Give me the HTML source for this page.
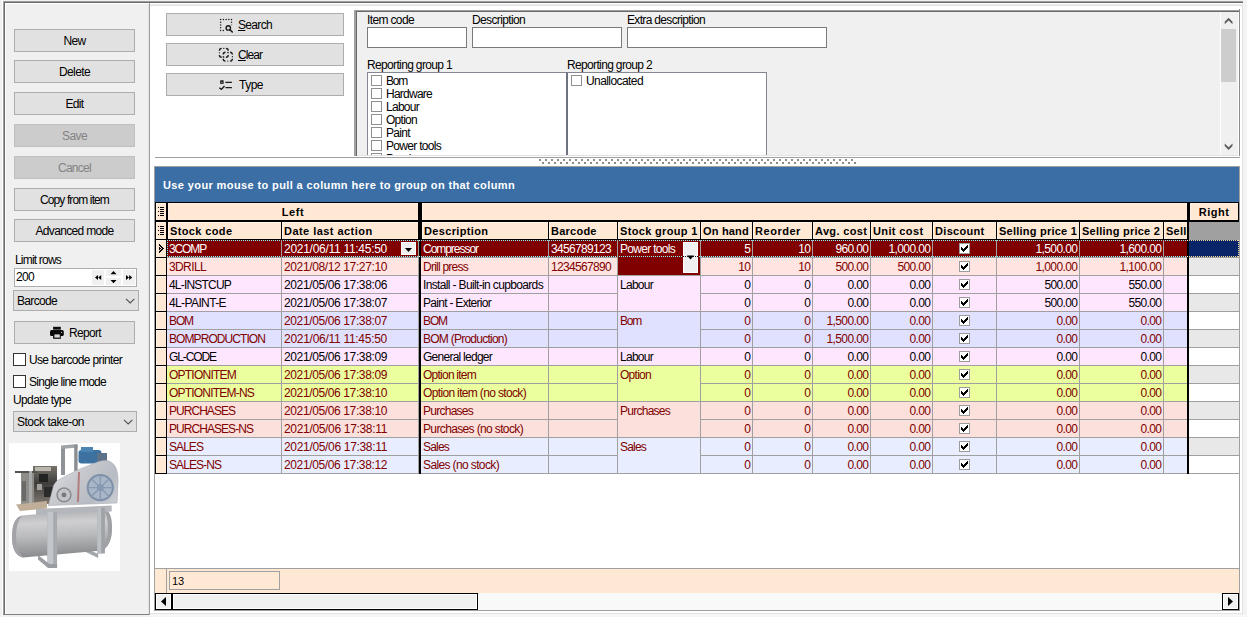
<!DOCTYPE html><html><head><meta charset="utf-8"><title>Stock items</title><style>
html,body{margin:0;padding:0;}
body{width:1247px;height:617px;background:#f0f0f0;position:relative;overflow:hidden;font-family:"Liberation Sans",sans-serif;font-size:11px;color:#000;}
div{position:absolute;box-sizing:border-box;}
svg{position:absolute;overflow:visible;}
.t{line-height:13px;height:13px;white-space:nowrap;font-size:12px;}
.b{line-height:13px;height:13px;white-space:nowrap;font-size:11px;font-weight:bold;letter-spacing:0.3px;}
.btn{background:#e1e1e1;border:1px solid #adadad;}
.btn.dis{background:#cccccc;border-color:#bfbfbf;}
.m{color:#800000;}
.w{color:#fff;}
</style></head><body>
<div style="left:2px;top:0px;width:1px;height:617px;background:#fff;"></div>
<div style="left:3px;top:1px;width:1242px;height:1px;background:#a0a0a0;"></div>
<div style="left:3px;top:1px;width:1px;height:614px;background:#a0a0a0;"></div>
<div style="left:4px;top:2px;width:1241px;height:1px;background:#696969;"></div>
<div style="left:4px;top:2px;width:1px;height:613px;background:#696969;"></div>
<div style="left:5px;top:3px;width:1240px;height:1px;background:#fff;"></div>
<div style="left:5px;top:3px;width:1px;height:611px;background:#fff;"></div>
<div style="left:3px;top:614px;width:147px;height:1px;background:#808080;"></div>
<div style="left:149px;top:3px;width:1px;height:612px;background:#a0a0a0;"></div>
<div style="left:148px;top:4px;width:1px;height:610px;background:#e3e3e3;"></div>
<div style="left:150px;top:4px;width:1092px;height:611px;background:#fff;"></div>
<div style="left:150px;top:4px;width:1092px;height:1px;background:#f0f0f0;"></div>
<div style="left:150px;top:5px;width:1092px;height:1px;background:#e0e0e0;"></div>
<div style="left:1242px;top:4px;width:1px;height:610px;background:#e3e3e3;"></div>
<div style="left:1243px;top:0px;width:4px;height:617px;background:#f4f4f4;"></div>
<div style="left:150px;top:613px;width:1093px;height:1px;background:#e3e3e3;"></div>
<div style="left:150px;top:614px;width:1097px;height:3px;background:#f6f6f6;"></div>
<div class="btn" style="left:14px;top:29px;width:121px;height:23px;"></div>
<div class="t" style="left:14px;top:35px;width:121px;text-align:center;letter-spacing:-0.668px;">New</div>
<div class="btn" style="left:14px;top:60px;width:121px;height:23px;"></div>
<div class="t" style="left:14px;top:66px;width:121px;text-align:center;letter-spacing:-0.614px;">Delete</div>
<div class="btn" style="left:14px;top:92px;width:121px;height:23px;"></div>
<div class="t" style="left:14px;top:98px;width:121px;text-align:center;letter-spacing:-0.67px;">Edit</div>
<div class="btn dis" style="left:14px;top:124px;width:121px;height:23px;"></div>
<div class="t" style="left:14px;top:130px;width:121px;text-align:center;letter-spacing:-0.588px;color:#838383;">Save</div>
<div class="btn dis" style="left:14px;top:156px;width:121px;height:23px;"></div>
<div class="t" style="left:14px;top:162px;width:121px;text-align:center;letter-spacing:-0.725px;color:#838383;">Cancel</div>
<div class="btn" style="left:14px;top:188px;width:121px;height:23px;"></div>
<div class="t" style="left:14px;top:194px;width:121px;text-align:center;letter-spacing:-0.882px;">Copy from item</div>
<div class="btn" style="left:14px;top:219px;width:121px;height:23px;"></div>
<div class="t" style="left:14px;top:225px;width:121px;text-align:center;letter-spacing:-0.671px;">Advanced mode</div>
<div class="t" style="left:15px;top:254px;letter-spacing:-0.801px;">Limit rows</div>
<div style="left:14px;top:268px;width:123px;height:19px;background:#fff;border:1px solid #adadad;"></div>
<div class="t" style="left:16px;top:271px;letter-spacing:-0.673px;">200</div>
<div style="left:92px;top:270px;width:12px;height:15px;background:#f0f0f0;"></div>
<div style="left:106px;top:270px;width:15px;height:6px;background:#f0f0f0;"></div>
<div style="left:106px;top:278px;width:15px;height:7px;background:#f0f0f0;"></div>
<div style="left:123px;top:270px;width:12px;height:15px;background:#f0f0f0;"></div>
<div style="left:13px;top:290px;width:126px;height:21px;background:#e1e1e1;border:1px solid #adadad;"></div>
<div class="t" style="left:17px;top:295px;letter-spacing:-0.671px;">Barcode</div>
<div class="btn" style="left:14px;top:321px;width:121px;height:23px;"></div>
<div class="t" style="left:69px;top:327px;letter-spacing:-0.67px;">Report</div>
<div style="left:13px;top:353px;width:13px;height:13px;background:#fff;border:1px solid #333;"></div>
<div class="t" style="left:29px;top:354px;letter-spacing:-0.652px;">Use barcode printer</div>
<div style="left:13px;top:375px;width:13px;height:13px;background:#fff;border:1px solid #333;"></div>
<div class="t" style="left:29px;top:376px;letter-spacing:-0.733px;">Single line mode</div>
<div class="t" style="left:13px;top:394px;letter-spacing:-0.61px;">Update type</div>
<div style="left:13px;top:411px;width:124px;height:21px;background:#e1e1e1;border:1px solid #adadad;"></div>
<div class="t" style="left:17px;top:416px;letter-spacing:-0.49px;">Stock take-on</div>
<svg style="left:9px;top:443px" width="111" height="128" viewBox="0 0 111 128">
<defs>
<linearGradient id="tk" x1="0" y1="0" x2="0.1" y2="1"><stop offset="0" stop-color="#a4a5a8"/><stop offset="0.32" stop-color="#cfcfd1"/><stop offset="0.6" stop-color="#b9babc"/><stop offset="1" stop-color="#8a8b8e"/></linearGradient>
<linearGradient id="gd" x1="0" y1="0.2" x2="1" y2="0.8"><stop offset="0" stop-color="#dddee2"/><stop offset="0.4" stop-color="#c6c8cd"/><stop offset="0.75" stop-color="#b7bbc3"/><stop offset="1" stop-color="#c8cbd1"/></linearGradient>
<linearGradient id="en" x1="0" y1="0" x2="0" y2="1"><stop offset="0" stop-color="#77736c"/><stop offset="0.45" stop-color="#3f3d3c"/><stop offset="1" stop-color="#7d766d"/></linearGradient>
<filter id="bl" x="-5%" y="-5%" width="110%" height="110%"><feGaussianBlur stdDeviation="0.6"/></filter>
</defs>
<rect width="111" height="128" fill="#fff"/>
<g filter="url(#bl)">
<path d="M73.6 103.7 L89.2 111 L89.2 115 L73.6 107.5 Z" fill="#a2a6ab"/>
<path d="M13 72.5 L94 65.5 Q103 67 103 85 Q103 102 93 107.5 L14 114.5 Q3 112 3 93.5 Q3 75 13 72.5 Z" fill="url(#tk)"/>
<path d="M94 65.5 Q103 67 103 85 Q103 102 93 107.5 Q99 99 99 85 Q99 72 94 65.5Z" fill="#9fa1a4"/>
<path d="M13 72.5 Q3 75 3 93.5 Q3 112 14 114.5 Q7 107 7 93.5 Q7 80 13 72.5Z" fill="#a2a4a7"/>
<rect x="52" y="3" width="4" height="29" fill="#8f9297"/><path d="M52 2.5 L68.5 1 L68.5 4.5 L52 6 Z" fill="#a0a3a8"/><rect x="65.2" y="2" width="3.4" height="26" fill="#8a8d92"/>
<rect x="69.5" y="7" width="23" height="13.5" rx="3" fill="#3d72a0"/><rect x="72" y="4" width="12" height="5" fill="#4c84b3"/><rect x="88" y="10" width="10" height="8" fill="#5d7187"/>
<rect x="24" y="23" width="24" height="38" fill="url(#en)"/>
<rect x="12" y="30" width="13" height="32" fill="#8e8d8a"/>
<rect x="6" y="28" width="22" height="2" fill="#55524e"/>
<rect x="20" y="28" width="3" height="36" fill="#a9abab"/><rect x="30" y="31" width="9" height="8" fill="#222"/><rect x="35" y="44" width="9" height="10" fill="#2b2b2b"/>
<rect x="13" y="38" width="4" height="20" fill="#6b6a68"/><rect x="26" y="24" width="16" height="4" fill="#b9b6ae"/><rect x="28" y="41" width="5" height="6" fill="#a3a19c"/>
<path d="M7 61.5 L38 58 L38 65.5 L11 68 Z" fill="#c0ae98"/>
<path d="M39.4 62.5 L44.6 42.5 Q47 37.5 52 35.5 L68.5 27 L90 18.5 Q101 15 106 23 Q109.5 29 109 40 L108 60 Z" fill="url(#gd)" stroke="#a9adb3" stroke-width="0.6"/>
<circle cx="91.3" cy="44.6" r="12.6" fill="#a9b6c7" stroke="#7d90a8" stroke-width="2"/>
<circle cx="91.3" cy="44.6" r="3.4" fill="#7f92aa"/>
<path d="M91.3 32 V57.2 M78.7 44.6 H103.9 M82.4 35.7 L100.2 53.5 M82.4 53.5 L100.2 35.7" stroke="#879ab2" stroke-width="1.4"/>
<circle cx="55" cy="51.9" r="6.9" fill="#c3c4c8" stroke="#8a8b90" stroke-width="1.5"/><circle cx="55" cy="51.9" r="2.4" fill="#77787d"/>
<path d="M70 29 L69 59" stroke="#b06a6a" stroke-width="2" opacity="0.8"/>
<path d="M27 66 L102.7 62.5 L102.7 68.5 L27 72 Z" fill="#b3b7bc"/>
<rect x="38.4" y="69" width="9.7" height="54.5" fill="#a7abb0"/><rect x="38.4" y="69" width="5.8" height="54.5" fill="#c3c6ca"/>
<rect x="88.2" y="64.5" width="7.7" height="46" fill="#9fa3a8"/><rect x="88.2" y="64.5" width="4" height="46" fill="#bcbfc4"/>
<path d="M29 112 L40.5 121 L48.1 121 L48.1 125 L39 125 L29 116.5 Z" fill="#9a9ea3"/>
</g>
</svg>

<div class="btn" style="left:166px;top:13px;width:178px;height:23px;"></div>
<div class="btn" style="left:166px;top:43px;width:178px;height:23px;"></div>
<div class="btn" style="left:166px;top:73px;width:178px;height:23px;"></div>
<div class="t" style="left:238px;top:19px;letter-spacing:-0.67px;"><span style="text-decoration:underline">S</span>earch</div>
<div class="t" style="left:238px;top:49px;letter-spacing:-0.935px;"><span style="text-decoration:underline">C</span>lear</div>
<div class="t" style="left:239px;top:79px;letter-spacing:-0.504px;">Type</div>
<div style="left:354px;top:10px;width:886px;height:147px;background:#f0f0f0;"></div>
<div style="left:354px;top:10px;width:885px;height:1px;background:#a0a0a0;"></div>
<div style="left:354px;top:11px;width:885px;height:1px;background:#696969;"></div>
<div style="left:354px;top:10px;width:2px;height:146px;background:#a0a0a0;"></div>
<div style="left:356px;top:11px;width:1px;height:145px;background:#696969;"></div>
<div style="left:1238px;top:12px;width:1px;height:144px;background:#fff;"></div>
<div style="left:1239px;top:9px;width:1px;height:149px;background:#8c8c8c;"></div>
<div style="left:357px;top:155px;width:881px;height:1px;background:#e3e3e3;"></div>
<div style="left:354px;top:156px;width:886px;height:1px;background:#fff;"></div>
<div style="left:155px;top:157px;width:1085px;height:1px;background:#a0a0a0;"></div>
<div class="t" style="left:367px;top:14px;letter-spacing:-0.633px;">Item code</div>
<div class="t" style="left:472px;top:14px;letter-spacing:-0.638px;">Description</div>
<div class="t" style="left:627px;top:14px;letter-spacing:-0.669px;">Extra description</div>
<div style="left:367px;top:27px;width:100px;height:21px;background:#fff;border:1px solid #7a7a7a;"></div>
<div style="left:472px;top:27px;width:150px;height:21px;background:#fff;border:1px solid #7a7a7a;"></div>
<div style="left:627px;top:27px;width:200px;height:21px;background:#fff;border:1px solid #7a7a7a;"></div>
<div class="t" style="left:367px;top:59px;letter-spacing:-0.651px;">Reporting group 1</div>
<div class="t" style="left:567px;top:59px;letter-spacing:-0.651px;">Reporting group 2</div>
<div style="left:367px;top:72px;width:200px;height:83px;background:#fff;border:1px solid #828790;border-bottom:none;"></div>
<div style="left:566px;top:72px;width:201px;height:83px;background:#fff;border:1px solid #828790;border-left:2px solid #6d7380;border-bottom:none;"></div>
<div style="left:371px;top:75px;width:11px;height:11px;background:#fff;border:1px solid #8e8f8f;"></div>
<div class="t" style="left:386px;top:75px;letter-spacing:-1.225px;">Bom</div>
<div style="left:371px;top:88px;width:11px;height:11px;background:#fff;border:1px solid #8e8f8f;"></div>
<div class="t" style="left:386px;top:88px;letter-spacing:-0.752px;">Hardware</div>
<div style="left:371px;top:101px;width:11px;height:11px;background:#fff;border:1px solid #8e8f8f;"></div>
<div class="t" style="left:386px;top:101px;letter-spacing:-0.727px;">Labour</div>
<div style="left:371px;top:114px;width:11px;height:11px;background:#fff;border:1px solid #8e8f8f;"></div>
<div class="t" style="left:386px;top:114px;letter-spacing:-0.726px;">Option</div>
<div style="left:371px;top:127px;width:11px;height:11px;background:#fff;border:1px solid #8e8f8f;"></div>
<div class="t" style="left:386px;top:127px;letter-spacing:-0.67px;">Paint</div>
<div style="left:371px;top:140px;width:11px;height:11px;background:#fff;border:1px solid #8e8f8f;"></div>
<div class="t" style="left:386px;top:140px;letter-spacing:-0.7px;">Power tools</div>
<div style="left:371px;top:153px;width:11px;height:2px;background:#fff;border:1px solid #8e8f8f;border-bottom:none;"></div>
<div style="left:386px;top:153px;width:40px;height:2px;overflow:hidden;"><div class="t" style="left:0;top:0px;letter-spacing:-0.5px">Purchases</div></div>
<div style="left:571px;top:75px;width:11px;height:11px;background:#fff;border:1px solid #8e8f8f;"></div>
<div class="t" style="left:586px;top:75px;letter-spacing:-0.579px;">Unallocated</div>
<div style="left:1220px;top:12px;width:1px;height:143px;background:#fff;"></div>
<div style="left:1221px;top:12px;width:17px;height:143px;background:#f0f0f0;"></div>
<div style="left:1221px;top:29px;width:15px;height:53px;background:#cdcdcd;"></div>
<svg style="left:539px;top:159px" width="324" height="5" viewBox="0 0 324 5"><defs><pattern id="dp" width="6" height="5" patternUnits="userSpaceOnUse"><rect x="0" y="0" width="2" height="2" fill="#8c8c8c"/><rect x="3" y="3" width="2" height="2" fill="#8c8c8c"/></pattern></defs><rect x="0" y="0" width="317" height="5" fill="url(#dp)"/></svg>
<div style="left:154px;top:166px;width:1086px;height:445px;background:#fff;border:1px solid #a0a0a0;"></div>
<div style="left:155px;top:167px;width:1084px;height:35px;background:#3a6ea5;"></div>
<div class="b w" style="left:163px;top:179px;letter-spacing:0.387px;">Use your mouse to pull a column here to group on that column</div>
<div style="left:155px;top:202px;width:1084px;height:38px;background:#000;"></div>
<div style="left:156px;top:203px;width:10px;height:17px;background:#ffe8d4;box-shadow:inset 1px 1px 0 #fff3e8;"></div>
<div style="left:156px;top:222px;width:10px;height:17px;background:#ffe8d4;box-shadow:inset 1px 1px 0 #fff3e8;"></div>
<div style="left:168px;top:203px;width:250px;height:17px;background:#ffe8d4;box-shadow:inset 1px 1px 0 #fff3e8;"></div>
<div style="left:422px;top:203px;width:765px;height:17px;background:#ffe8d4;box-shadow:inset 1px 1px 0 #fff3e8;"></div>
<div style="left:1190px;top:203px;width:48px;height:17px;background:#ffe8d4;box-shadow:inset 1px 1px 0 #fff3e8;"></div>
<div style="left:1189px;top:222px;width:50px;height:17px;background:#a0a0a0;"></div>
<div style="left:1189px;top:239px;width:50px;height:1px;background:#a0a0a0;"></div>
<div class="b" style="left:168px;top:206px;width:250px;text-align:center;letter-spacing:0.56px;">Left</div>
<div class="b" style="left:1190px;top:206px;width:48px;text-align:center;letter-spacing:0.5px;">Right</div>
<div style="left:168px;top:222px;width:113px;height:17px;background:#ffe8d4;overflow:hidden;box-shadow:inset 1px 1px 0 #fff3e8;"><div class="b" style="left:2px;top:3px;letter-spacing:0.372px;">Stock code</div></div>
<div style="left:282px;top:222px;width:136px;height:17px;background:#ffe8d4;overflow:hidden;box-shadow:inset 1px 1px 0 #fff3e8;"><div class="b" style="left:2px;top:3px;letter-spacing:0.456px;">Date last action</div></div>
<div style="left:422px;top:222px;width:126px;height:17px;background:#ffe8d4;overflow:hidden;box-shadow:inset 1px 1px 0 #fff3e8;"><div class="b" style="left:2px;top:3px;letter-spacing:0.345px;">Description</div></div>
<div style="left:549px;top:222px;width:68px;height:17px;background:#ffe8d4;overflow:hidden;box-shadow:inset 1px 1px 0 #fff3e8;"><div class="b" style="left:2px;top:3px;letter-spacing:0.241px;">Barcode</div></div>
<div style="left:618px;top:222px;width:82px;height:17px;background:#ffe8d4;overflow:hidden;box-shadow:inset 1px 1px 0 #fff3e8;"><div class="b" style="left:2px;top:3px;letter-spacing:0.335px;">Stock group 1</div></div>
<div style="left:701px;top:222px;width:51px;height:17px;background:#ffe8d4;overflow:hidden;box-shadow:inset 1px 1px 0 #fff3e8;"><div class="b" style="left:2px;top:3px;letter-spacing:0.185px;">On hand</div></div>
<div style="left:753px;top:222px;width:59px;height:17px;background:#ffe8d4;overflow:hidden;box-shadow:inset 1px 1px 0 #fff3e8;"><div class="b" style="left:2px;top:3px;letter-spacing:0.532px;">Reorder</div></div>
<div style="left:813px;top:222px;width:57px;height:17px;background:#ffe8d4;overflow:hidden;box-shadow:inset 1px 1px 0 #fff3e8;"><div class="b" style="left:2px;top:3px;letter-spacing:0.356px;">Avg. cost</div></div>
<div style="left:871px;top:222px;width:61px;height:17px;background:#ffe8d4;overflow:hidden;box-shadow:inset 1px 1px 0 #fff3e8;"><div class="b" style="left:2px;top:3px;letter-spacing:0.383px;">Unit cost</div></div>
<div style="left:933px;top:222px;width:63px;height:17px;background:#ffe8d4;overflow:hidden;box-shadow:inset 1px 1px 0 #fff3e8;"><div class="b" style="left:2px;top:3px;letter-spacing:0.318px;">Discount</div></div>
<div style="left:997px;top:222px;width:82px;height:17px;background:#ffe8d4;overflow:hidden;box-shadow:inset 1px 1px 0 #fff3e8;"><div class="b" style="left:2px;top:3px;letter-spacing:0.228px;">Selling price 1</div></div>
<div style="left:1080px;top:222px;width:83px;height:17px;background:#ffe8d4;overflow:hidden;box-shadow:inset 1px 1px 0 #fff3e8;"><div class="b" style="left:2px;top:3px;letter-spacing:0.235px;">Selling price 2</div></div>
<div style="left:1164px;top:222px;width:23px;height:17px;background:#ffe8d4;overflow:hidden;box-shadow:inset 1px 1px 0 #fff3e8;"><div class="b" style="left:2px;top:3px;letter-spacing:0.235px;">Selling price 3</div></div>
<div style="left:155px;top:240px;width:1084px;height:234px;background:#a0a0a0;"></div>
<div style="left:155px;top:239px;width:12px;height:235px;background:#000;"></div>
<div style="left:156px;top:240px;width:10px;height:17px;background:#ffe8d4;box-shadow:inset 1px 1px 0 #fff3e8;"></div>
<div style="left:156px;top:258px;width:10px;height:17px;background:#ffe8d4;box-shadow:inset 1px 1px 0 #fff3e8;"></div>
<div style="left:156px;top:276px;width:10px;height:17px;background:#ffe8d4;box-shadow:inset 1px 1px 0 #fff3e8;"></div>
<div style="left:156px;top:294px;width:10px;height:17px;background:#ffe8d4;box-shadow:inset 1px 1px 0 #fff3e8;"></div>
<div style="left:156px;top:312px;width:10px;height:17px;background:#ffe8d4;box-shadow:inset 1px 1px 0 #fff3e8;"></div>
<div style="left:156px;top:330px;width:10px;height:17px;background:#ffe8d4;box-shadow:inset 1px 1px 0 #fff3e8;"></div>
<div style="left:156px;top:348px;width:10px;height:17px;background:#ffe8d4;box-shadow:inset 1px 1px 0 #fff3e8;"></div>
<div style="left:156px;top:366px;width:10px;height:17px;background:#ffe8d4;box-shadow:inset 1px 1px 0 #fff3e8;"></div>
<div style="left:156px;top:384px;width:10px;height:17px;background:#ffe8d4;box-shadow:inset 1px 1px 0 #fff3e8;"></div>
<div style="left:156px;top:402px;width:10px;height:17px;background:#ffe8d4;box-shadow:inset 1px 1px 0 #fff3e8;"></div>
<div style="left:156px;top:420px;width:10px;height:17px;background:#ffe8d4;box-shadow:inset 1px 1px 0 #fff3e8;"></div>
<div style="left:156px;top:438px;width:10px;height:17px;background:#ffe8d4;box-shadow:inset 1px 1px 0 #fff3e8;"></div>
<div style="left:156px;top:456px;width:10px;height:17px;background:#ffe8d4;box-shadow:inset 1px 1px 0 #fff3e8;"></div>
<div style="left:419px;top:240px;width:2px;height:234px;background:#000;"></div>
<div style="left:1187px;top:240px;width:2px;height:234px;background:#000;"></div>
<div style="left:167px;top:240px;width:114px;height:17px;background:#800000;"></div>
<div class="t" style="left:169px;top:243px;letter-spacing:-1.135px;color:#fff;">3COMP</div>
<div style="left:282px;top:240px;width:136px;height:17px;background:#800000;"></div>
<div class="t" style="left:284px;top:243px;letter-spacing:-0.28px;color:#fff;">2021/06/11 11:45:50</div>
<div style="left:421px;top:240px;width:127px;height:17px;background:#800000;"></div>
<div class="t" style="left:423px;top:243px;letter-spacing:-1.035px;color:#fff;">Compressor</div>
<div style="left:549px;top:240px;width:68px;height:17px;background:#800000;"></div>
<div class="t" style="left:551px;top:243px;letter-spacing:-0.673px;color:#fff;">3456789123</div>
<div style="left:701px;top:240px;width:51px;height:17px;background:#800000;"></div>
<div class="t" style="left:701px;top:243px;width:50px;text-align:right;letter-spacing:-0.673px;padding-right:0.673px;color:#fff;">5</div>
<div style="left:753px;top:240px;width:59px;height:17px;background:#800000;"></div>
<div class="t" style="left:753px;top:243px;width:58px;text-align:right;letter-spacing:-0.673px;padding-right:0.673px;color:#fff;">10</div>
<div style="left:813px;top:240px;width:57px;height:17px;background:#800000;"></div>
<div class="t" style="left:813px;top:243px;width:56px;text-align:right;letter-spacing:-0.617px;padding-right:0.617px;color:#fff;">960.00</div>
<div style="left:871px;top:240px;width:61px;height:17px;background:#800000;"></div>
<div class="t" style="left:871px;top:243px;width:60px;text-align:right;letter-spacing:-0.589px;padding-right:0.589px;color:#fff;">1,000.00</div>
<div style="left:933px;top:240px;width:63px;height:17px;background:#800000;"></div>
<div style="left:959px;top:243px;width:11px;height:11px;background:#fff;border:1px solid #9c9c9c;"></div>
<div style="left:997px;top:240px;width:82px;height:17px;background:#800000;"></div>
<div class="t" style="left:997px;top:243px;width:81px;text-align:right;letter-spacing:-0.589px;padding-right:0.589px;color:#fff;">1,500.00</div>
<div style="left:1080px;top:240px;width:83px;height:17px;background:#800000;"></div>
<div class="t" style="left:1080px;top:243px;width:82px;text-align:right;letter-spacing:-0.589px;padding-right:0.589px;color:#fff;">1,600.00</div>
<div style="left:1164px;top:240px;width:23px;height:17px;background:#800000;"></div>
<div style="left:1189px;top:240px;width:50px;height:17px;background:#0a246a;"></div>
<div style="left:167px;top:258px;width:114px;height:17px;background:#ffe4e1;"></div>
<div class="t" style="left:169px;top:261px;letter-spacing:-0.614px;color:#800000;">3DRILL</div>
<div style="left:282px;top:258px;width:136px;height:17px;background:#ffe4e1;"></div>
<div class="t" style="left:284px;top:261px;letter-spacing:-0.374px;color:#800000;">2021/08/12 17:27:10</div>
<div style="left:421px;top:258px;width:127px;height:17px;background:#ffe4e1;"></div>
<div class="t" style="left:423px;top:261px;letter-spacing:-0.758px;color:#800000;">Drill press</div>
<div style="left:549px;top:258px;width:68px;height:17px;background:#ffe4e1;"></div>
<div class="t" style="left:551px;top:261px;letter-spacing:-0.673px;color:#800000;">1234567890</div>
<div style="left:701px;top:258px;width:51px;height:17px;background:#ffe4e1;"></div>
<div class="t" style="left:701px;top:261px;width:50px;text-align:right;letter-spacing:-0.673px;padding-right:0.673px;color:#800000;">10</div>
<div style="left:753px;top:258px;width:59px;height:17px;background:#ffe4e1;"></div>
<div class="t" style="left:753px;top:261px;width:58px;text-align:right;letter-spacing:-0.673px;padding-right:0.673px;color:#800000;">10</div>
<div style="left:813px;top:258px;width:57px;height:17px;background:#ffe4e1;"></div>
<div class="t" style="left:813px;top:261px;width:56px;text-align:right;letter-spacing:-0.617px;padding-right:0.617px;color:#800000;">500.00</div>
<div style="left:871px;top:258px;width:61px;height:17px;background:#ffe4e1;"></div>
<div class="t" style="left:871px;top:261px;width:60px;text-align:right;letter-spacing:-0.617px;padding-right:0.617px;color:#800000;">500.00</div>
<div style="left:933px;top:258px;width:63px;height:17px;background:#ffe4e1;"></div>
<div style="left:959px;top:261px;width:11px;height:11px;background:#fff;border:1px solid #9c9c9c;"></div>
<div style="left:997px;top:258px;width:82px;height:17px;background:#ffe4e1;"></div>
<div class="t" style="left:997px;top:261px;width:81px;text-align:right;letter-spacing:-0.589px;padding-right:0.589px;color:#800000;">1,000.00</div>
<div style="left:1080px;top:258px;width:83px;height:17px;background:#ffe4e1;"></div>
<div class="t" style="left:1080px;top:261px;width:82px;text-align:right;letter-spacing:-0.589px;padding-right:0.589px;color:#800000;">1,100.00</div>
<div style="left:1164px;top:258px;width:23px;height:17px;background:#ffe4e1;"></div>
<div style="left:1189px;top:258px;width:50px;height:17px;background:#e8e8e8;"></div>
<div style="left:167px;top:276px;width:114px;height:17px;background:#ffe6ff;"></div>
<div class="t" style="left:169px;top:279px;letter-spacing:-0.801px;color:#000;">4L-INSTCUP</div>
<div style="left:282px;top:276px;width:136px;height:17px;background:#ffe6ff;"></div>
<div class="t" style="left:284px;top:279px;letter-spacing:-0.374px;color:#000;">2021/05/06 17:38:06</div>
<div style="left:421px;top:276px;width:127px;height:17px;background:#ffe6ff;"></div>
<div class="t" style="left:423px;top:279px;letter-spacing:-0.645px;color:#000;">Install - Built-in cupboards</div>
<div style="left:549px;top:276px;width:68px;height:17px;background:#ffe6ff;"></div>
<div style="left:701px;top:276px;width:51px;height:17px;background:#ffe6ff;"></div>
<div class="t" style="left:701px;top:279px;width:50px;text-align:right;letter-spacing:-0.673px;padding-right:0.673px;color:#000;">0</div>
<div style="left:753px;top:276px;width:59px;height:17px;background:#ffe6ff;"></div>
<div class="t" style="left:753px;top:279px;width:58px;text-align:right;letter-spacing:-0.673px;padding-right:0.673px;color:#000;">0</div>
<div style="left:813px;top:276px;width:57px;height:17px;background:#ffe6ff;"></div>
<div class="t" style="left:813px;top:279px;width:56px;text-align:right;letter-spacing:-0.589px;padding-right:0.589px;color:#000;">0.00</div>
<div style="left:871px;top:276px;width:61px;height:17px;background:#ffe6ff;"></div>
<div class="t" style="left:871px;top:279px;width:60px;text-align:right;letter-spacing:-0.589px;padding-right:0.589px;color:#000;">0.00</div>
<div style="left:933px;top:276px;width:63px;height:17px;background:#ffe6ff;"></div>
<div style="left:959px;top:279px;width:11px;height:11px;background:#fff;border:1px solid #9c9c9c;"></div>
<div style="left:997px;top:276px;width:82px;height:17px;background:#ffe6ff;"></div>
<div class="t" style="left:997px;top:279px;width:81px;text-align:right;letter-spacing:-0.617px;padding-right:0.617px;color:#000;">500.00</div>
<div style="left:1080px;top:276px;width:83px;height:17px;background:#ffe6ff;"></div>
<div class="t" style="left:1080px;top:279px;width:82px;text-align:right;letter-spacing:-0.617px;padding-right:0.617px;color:#000;">550.00</div>
<div style="left:1164px;top:276px;width:23px;height:17px;background:#ffe6ff;"></div>
<div style="left:1189px;top:276px;width:50px;height:17px;background:#fff;"></div>
<div style="left:167px;top:294px;width:114px;height:17px;background:#ffe6ff;"></div>
<div class="t" style="left:169px;top:297px;letter-spacing:-0.613px;color:#000;">4L-PAINT-E</div>
<div style="left:282px;top:294px;width:136px;height:17px;background:#ffe6ff;"></div>
<div class="t" style="left:284px;top:297px;letter-spacing:-0.374px;color:#000;">2021/05/06 17:38:07</div>
<div style="left:421px;top:294px;width:127px;height:17px;background:#ffe6ff;"></div>
<div class="t" style="left:423px;top:297px;letter-spacing:-0.71px;color:#000;">Paint - Exterior</div>
<div style="left:549px;top:294px;width:68px;height:17px;background:#ffe6ff;"></div>
<div style="left:701px;top:294px;width:51px;height:17px;background:#ffe6ff;"></div>
<div class="t" style="left:701px;top:297px;width:50px;text-align:right;letter-spacing:-0.673px;padding-right:0.673px;color:#000;">0</div>
<div style="left:753px;top:294px;width:59px;height:17px;background:#ffe6ff;"></div>
<div class="t" style="left:753px;top:297px;width:58px;text-align:right;letter-spacing:-0.673px;padding-right:0.673px;color:#000;">0</div>
<div style="left:813px;top:294px;width:57px;height:17px;background:#ffe6ff;"></div>
<div class="t" style="left:813px;top:297px;width:56px;text-align:right;letter-spacing:-0.589px;padding-right:0.589px;color:#000;">0.00</div>
<div style="left:871px;top:294px;width:61px;height:17px;background:#ffe6ff;"></div>
<div class="t" style="left:871px;top:297px;width:60px;text-align:right;letter-spacing:-0.589px;padding-right:0.589px;color:#000;">0.00</div>
<div style="left:933px;top:294px;width:63px;height:17px;background:#ffe6ff;"></div>
<div style="left:959px;top:297px;width:11px;height:11px;background:#fff;border:1px solid #9c9c9c;"></div>
<div style="left:997px;top:294px;width:82px;height:17px;background:#ffe6ff;"></div>
<div class="t" style="left:997px;top:297px;width:81px;text-align:right;letter-spacing:-0.617px;padding-right:0.617px;color:#000;">500.00</div>
<div style="left:1080px;top:294px;width:83px;height:17px;background:#ffe6ff;"></div>
<div class="t" style="left:1080px;top:297px;width:82px;text-align:right;letter-spacing:-0.617px;padding-right:0.617px;color:#000;">550.00</div>
<div style="left:1164px;top:294px;width:23px;height:17px;background:#ffe6ff;"></div>
<div style="left:1189px;top:294px;width:50px;height:17px;background:#e8e8e8;"></div>
<div style="left:167px;top:312px;width:114px;height:17px;background:#e0e0ff;"></div>
<div class="t" style="left:169px;top:315px;letter-spacing:-1.112px;color:#800000;">BOM</div>
<div style="left:282px;top:312px;width:136px;height:17px;background:#e0e0ff;"></div>
<div class="t" style="left:284px;top:315px;letter-spacing:-0.374px;color:#800000;">2021/05/06 17:38:07</div>
<div style="left:421px;top:312px;width:127px;height:17px;background:#e0e0ff;"></div>
<div class="t" style="left:423px;top:315px;letter-spacing:-1.112px;color:#800000;">BOM</div>
<div style="left:549px;top:312px;width:68px;height:17px;background:#e0e0ff;"></div>
<div style="left:701px;top:312px;width:51px;height:17px;background:#e0e0ff;"></div>
<div class="t" style="left:701px;top:315px;width:50px;text-align:right;letter-spacing:-0.673px;padding-right:0.673px;color:#800000;">0</div>
<div style="left:753px;top:312px;width:59px;height:17px;background:#e0e0ff;"></div>
<div class="t" style="left:753px;top:315px;width:58px;text-align:right;letter-spacing:-0.673px;padding-right:0.673px;color:#800000;">0</div>
<div style="left:813px;top:312px;width:57px;height:17px;background:#e0e0ff;"></div>
<div class="t" style="left:813px;top:315px;width:56px;text-align:right;letter-spacing:-0.589px;padding-right:0.589px;color:#800000;">1,500.00</div>
<div style="left:871px;top:312px;width:61px;height:17px;background:#e0e0ff;"></div>
<div class="t" style="left:871px;top:315px;width:60px;text-align:right;letter-spacing:-0.589px;padding-right:0.589px;color:#800000;">0.00</div>
<div style="left:933px;top:312px;width:63px;height:17px;background:#e0e0ff;"></div>
<div style="left:959px;top:315px;width:11px;height:11px;background:#fff;border:1px solid #9c9c9c;"></div>
<div style="left:997px;top:312px;width:82px;height:17px;background:#e0e0ff;"></div>
<div class="t" style="left:997px;top:315px;width:81px;text-align:right;letter-spacing:-0.589px;padding-right:0.589px;color:#800000;">0.00</div>
<div style="left:1080px;top:312px;width:83px;height:17px;background:#e0e0ff;"></div>
<div class="t" style="left:1080px;top:315px;width:82px;text-align:right;letter-spacing:-0.589px;padding-right:0.589px;color:#800000;">0.00</div>
<div style="left:1164px;top:312px;width:23px;height:17px;background:#e0e0ff;"></div>
<div style="left:1189px;top:312px;width:50px;height:17px;background:#fff;"></div>
<div style="left:167px;top:330px;width:114px;height:17px;background:#e0e0ff;"></div>
<div class="t" style="left:169px;top:333px;letter-spacing:-0.923px;color:#800000;">BOMPRODUCTION</div>
<div style="left:282px;top:330px;width:136px;height:17px;background:#e0e0ff;"></div>
<div class="t" style="left:284px;top:333px;letter-spacing:-0.28px;color:#800000;">2021/06/11 11:45:50</div>
<div style="left:421px;top:330px;width:127px;height:17px;background:#e0e0ff;"></div>
<div class="t" style="left:423px;top:333px;letter-spacing:-0.752px;color:#800000;">BOM (Production)</div>
<div style="left:549px;top:330px;width:68px;height:17px;background:#e0e0ff;"></div>
<div style="left:701px;top:330px;width:51px;height:17px;background:#e0e0ff;"></div>
<div class="t" style="left:701px;top:333px;width:50px;text-align:right;letter-spacing:-0.673px;padding-right:0.673px;color:#800000;">0</div>
<div style="left:753px;top:330px;width:59px;height:17px;background:#e0e0ff;"></div>
<div class="t" style="left:753px;top:333px;width:58px;text-align:right;letter-spacing:-0.673px;padding-right:0.673px;color:#800000;">0</div>
<div style="left:813px;top:330px;width:57px;height:17px;background:#e0e0ff;"></div>
<div class="t" style="left:813px;top:333px;width:56px;text-align:right;letter-spacing:-0.589px;padding-right:0.589px;color:#800000;">1,500.00</div>
<div style="left:871px;top:330px;width:61px;height:17px;background:#e0e0ff;"></div>
<div class="t" style="left:871px;top:333px;width:60px;text-align:right;letter-spacing:-0.589px;padding-right:0.589px;color:#800000;">0.00</div>
<div style="left:933px;top:330px;width:63px;height:17px;background:#e0e0ff;"></div>
<div style="left:959px;top:333px;width:11px;height:11px;background:#fff;border:1px solid #9c9c9c;"></div>
<div style="left:997px;top:330px;width:82px;height:17px;background:#e0e0ff;"></div>
<div class="t" style="left:997px;top:333px;width:81px;text-align:right;letter-spacing:-0.589px;padding-right:0.589px;color:#800000;">0.00</div>
<div style="left:1080px;top:330px;width:83px;height:17px;background:#e0e0ff;"></div>
<div class="t" style="left:1080px;top:333px;width:82px;text-align:right;letter-spacing:-0.589px;padding-right:0.589px;color:#800000;">0.00</div>
<div style="left:1164px;top:330px;width:23px;height:17px;background:#e0e0ff;"></div>
<div style="left:1189px;top:330px;width:50px;height:17px;background:#e8e8e8;"></div>
<div style="left:167px;top:348px;width:114px;height:17px;background:#ffe6ff;"></div>
<div class="t" style="left:169px;top:351px;letter-spacing:-1.096px;color:#000;">GL-CODE</div>
<div style="left:282px;top:348px;width:136px;height:17px;background:#ffe6ff;"></div>
<div class="t" style="left:284px;top:351px;letter-spacing:-0.374px;color:#000;">2021/05/06 17:38:09</div>
<div style="left:421px;top:348px;width:127px;height:17px;background:#ffe6ff;"></div>
<div class="t" style="left:423px;top:351px;letter-spacing:-0.742px;color:#000;">General ledger</div>
<div style="left:549px;top:348px;width:68px;height:17px;background:#ffe6ff;"></div>
<div style="left:701px;top:348px;width:51px;height:17px;background:#ffe6ff;"></div>
<div class="t" style="left:701px;top:351px;width:50px;text-align:right;letter-spacing:-0.673px;padding-right:0.673px;color:#000;">0</div>
<div style="left:753px;top:348px;width:59px;height:17px;background:#ffe6ff;"></div>
<div class="t" style="left:753px;top:351px;width:58px;text-align:right;letter-spacing:-0.673px;padding-right:0.673px;color:#000;">0</div>
<div style="left:813px;top:348px;width:57px;height:17px;background:#ffe6ff;"></div>
<div class="t" style="left:813px;top:351px;width:56px;text-align:right;letter-spacing:-0.589px;padding-right:0.589px;color:#000;">0.00</div>
<div style="left:871px;top:348px;width:61px;height:17px;background:#ffe6ff;"></div>
<div class="t" style="left:871px;top:351px;width:60px;text-align:right;letter-spacing:-0.589px;padding-right:0.589px;color:#000;">0.00</div>
<div style="left:933px;top:348px;width:63px;height:17px;background:#ffe6ff;"></div>
<div style="left:959px;top:351px;width:11px;height:11px;background:#fff;border:1px solid #9c9c9c;"></div>
<div style="left:997px;top:348px;width:82px;height:17px;background:#ffe6ff;"></div>
<div class="t" style="left:997px;top:351px;width:81px;text-align:right;letter-spacing:-0.589px;padding-right:0.589px;color:#000;">0.00</div>
<div style="left:1080px;top:348px;width:83px;height:17px;background:#ffe6ff;"></div>
<div class="t" style="left:1080px;top:351px;width:82px;text-align:right;letter-spacing:-0.589px;padding-right:0.589px;color:#000;">0.00</div>
<div style="left:1164px;top:348px;width:23px;height:17px;background:#ffe6ff;"></div>
<div style="left:1189px;top:348px;width:50px;height:17px;background:#fff;"></div>
<div style="left:167px;top:366px;width:114px;height:17px;background:#ebff9e;"></div>
<div class="t" style="left:169px;top:369px;letter-spacing:-0.767px;color:#800000;">OPTIONITEM</div>
<div style="left:282px;top:366px;width:136px;height:17px;background:#ebff9e;"></div>
<div class="t" style="left:284px;top:369px;letter-spacing:-0.374px;color:#800000;">2021/05/06 17:38:09</div>
<div style="left:421px;top:366px;width:127px;height:17px;background:#ebff9e;"></div>
<div class="t" style="left:423px;top:369px;letter-spacing:-0.76px;color:#800000;">Option item</div>
<div style="left:549px;top:366px;width:68px;height:17px;background:#ebff9e;"></div>
<div style="left:701px;top:366px;width:51px;height:17px;background:#ebff9e;"></div>
<div class="t" style="left:701px;top:369px;width:50px;text-align:right;letter-spacing:-0.673px;padding-right:0.673px;color:#800000;">0</div>
<div style="left:753px;top:366px;width:59px;height:17px;background:#ebff9e;"></div>
<div class="t" style="left:753px;top:369px;width:58px;text-align:right;letter-spacing:-0.673px;padding-right:0.673px;color:#800000;">0</div>
<div style="left:813px;top:366px;width:57px;height:17px;background:#ebff9e;"></div>
<div class="t" style="left:813px;top:369px;width:56px;text-align:right;letter-spacing:-0.589px;padding-right:0.589px;color:#800000;">0.00</div>
<div style="left:871px;top:366px;width:61px;height:17px;background:#ebff9e;"></div>
<div class="t" style="left:871px;top:369px;width:60px;text-align:right;letter-spacing:-0.589px;padding-right:0.589px;color:#800000;">0.00</div>
<div style="left:933px;top:366px;width:63px;height:17px;background:#ebff9e;"></div>
<div style="left:959px;top:369px;width:11px;height:11px;background:#fff;border:1px solid #9c9c9c;"></div>
<div style="left:997px;top:366px;width:82px;height:17px;background:#ebff9e;"></div>
<div class="t" style="left:997px;top:369px;width:81px;text-align:right;letter-spacing:-0.589px;padding-right:0.589px;color:#800000;">0.00</div>
<div style="left:1080px;top:366px;width:83px;height:17px;background:#ebff9e;"></div>
<div class="t" style="left:1080px;top:369px;width:82px;text-align:right;letter-spacing:-0.589px;padding-right:0.589px;color:#800000;">0.00</div>
<div style="left:1164px;top:366px;width:23px;height:17px;background:#ebff9e;"></div>
<div style="left:1189px;top:366px;width:50px;height:17px;background:#e8e8e8;"></div>
<div style="left:167px;top:384px;width:114px;height:17px;background:#ebff9e;"></div>
<div class="t" style="left:169px;top:387px;letter-spacing:-0.795px;color:#800000;">OPTIONITEM-NS</div>
<div style="left:282px;top:384px;width:136px;height:17px;background:#ebff9e;"></div>
<div class="t" style="left:284px;top:387px;letter-spacing:-0.374px;color:#800000;">2021/05/06 17:38:10</div>
<div style="left:421px;top:384px;width:127px;height:17px;background:#ebff9e;"></div>
<div class="t" style="left:423px;top:387px;letter-spacing:-0.653px;color:#800000;">Option item (no stock)</div>
<div style="left:549px;top:384px;width:68px;height:17px;background:#ebff9e;"></div>
<div style="left:701px;top:384px;width:51px;height:17px;background:#ebff9e;"></div>
<div class="t" style="left:701px;top:387px;width:50px;text-align:right;letter-spacing:-0.673px;padding-right:0.673px;color:#800000;">0</div>
<div style="left:753px;top:384px;width:59px;height:17px;background:#ebff9e;"></div>
<div class="t" style="left:753px;top:387px;width:58px;text-align:right;letter-spacing:-0.673px;padding-right:0.673px;color:#800000;">0</div>
<div style="left:813px;top:384px;width:57px;height:17px;background:#ebff9e;"></div>
<div class="t" style="left:813px;top:387px;width:56px;text-align:right;letter-spacing:-0.589px;padding-right:0.589px;color:#800000;">0.00</div>
<div style="left:871px;top:384px;width:61px;height:17px;background:#ebff9e;"></div>
<div class="t" style="left:871px;top:387px;width:60px;text-align:right;letter-spacing:-0.589px;padding-right:0.589px;color:#800000;">0.00</div>
<div style="left:933px;top:384px;width:63px;height:17px;background:#ebff9e;"></div>
<div style="left:959px;top:387px;width:11px;height:11px;background:#fff;border:1px solid #9c9c9c;"></div>
<div style="left:997px;top:384px;width:82px;height:17px;background:#ebff9e;"></div>
<div class="t" style="left:997px;top:387px;width:81px;text-align:right;letter-spacing:-0.589px;padding-right:0.589px;color:#800000;">0.00</div>
<div style="left:1080px;top:384px;width:83px;height:17px;background:#ebff9e;"></div>
<div class="t" style="left:1080px;top:387px;width:82px;text-align:right;letter-spacing:-0.589px;padding-right:0.589px;color:#800000;">0.00</div>
<div style="left:1164px;top:384px;width:23px;height:17px;background:#ebff9e;"></div>
<div style="left:1189px;top:384px;width:50px;height:17px;background:#fff;"></div>
<div style="left:167px;top:402px;width:114px;height:17px;background:#fce0dc;"></div>
<div class="t" style="left:169px;top:405px;letter-spacing:-0.965px;color:#800000;">PURCHASES</div>
<div style="left:282px;top:402px;width:136px;height:17px;background:#fce0dc;"></div>
<div class="t" style="left:284px;top:405px;letter-spacing:-0.374px;color:#800000;">2021/05/06 17:38:10</div>
<div style="left:421px;top:402px;width:127px;height:17px;background:#fce0dc;"></div>
<div class="t" style="left:423px;top:405px;letter-spacing:-0.744px;color:#800000;">Purchases</div>
<div style="left:549px;top:402px;width:68px;height:17px;background:#fce0dc;"></div>
<div style="left:701px;top:402px;width:51px;height:17px;background:#fce0dc;"></div>
<div class="t" style="left:701px;top:405px;width:50px;text-align:right;letter-spacing:-0.673px;padding-right:0.673px;color:#800000;">0</div>
<div style="left:753px;top:402px;width:59px;height:17px;background:#fce0dc;"></div>
<div class="t" style="left:753px;top:405px;width:58px;text-align:right;letter-spacing:-0.673px;padding-right:0.673px;color:#800000;">0</div>
<div style="left:813px;top:402px;width:57px;height:17px;background:#fce0dc;"></div>
<div class="t" style="left:813px;top:405px;width:56px;text-align:right;letter-spacing:-0.589px;padding-right:0.589px;color:#800000;">0.00</div>
<div style="left:871px;top:402px;width:61px;height:17px;background:#fce0dc;"></div>
<div class="t" style="left:871px;top:405px;width:60px;text-align:right;letter-spacing:-0.589px;padding-right:0.589px;color:#800000;">0.00</div>
<div style="left:933px;top:402px;width:63px;height:17px;background:#fce0dc;"></div>
<div style="left:959px;top:405px;width:11px;height:11px;background:#fff;border:1px solid #9c9c9c;"></div>
<div style="left:997px;top:402px;width:82px;height:17px;background:#fce0dc;"></div>
<div class="t" style="left:997px;top:405px;width:81px;text-align:right;letter-spacing:-0.589px;padding-right:0.589px;color:#800000;">0.00</div>
<div style="left:1080px;top:402px;width:83px;height:17px;background:#fce0dc;"></div>
<div class="t" style="left:1080px;top:405px;width:82px;text-align:right;letter-spacing:-0.589px;padding-right:0.589px;color:#800000;">0.00</div>
<div style="left:1164px;top:402px;width:23px;height:17px;background:#fce0dc;"></div>
<div style="left:1189px;top:402px;width:50px;height:17px;background:#e8e8e8;"></div>
<div style="left:167px;top:420px;width:114px;height:17px;background:#fce0dc;"></div>
<div class="t" style="left:169px;top:423px;letter-spacing:-0.946px;color:#800000;">PURCHASES-NS</div>
<div style="left:282px;top:420px;width:136px;height:17px;background:#fce0dc;"></div>
<div class="t" style="left:284px;top:423px;letter-spacing:-0.327px;color:#800000;">2021/05/06 17:38:11</div>
<div style="left:421px;top:420px;width:127px;height:17px;background:#fce0dc;"></div>
<div class="t" style="left:423px;top:423px;letter-spacing:-0.636px;color:#800000;">Purchases (no stock)</div>
<div style="left:549px;top:420px;width:68px;height:17px;background:#fce0dc;"></div>
<div style="left:701px;top:420px;width:51px;height:17px;background:#fce0dc;"></div>
<div class="t" style="left:701px;top:423px;width:50px;text-align:right;letter-spacing:-0.673px;padding-right:0.673px;color:#800000;">0</div>
<div style="left:753px;top:420px;width:59px;height:17px;background:#fce0dc;"></div>
<div class="t" style="left:753px;top:423px;width:58px;text-align:right;letter-spacing:-0.673px;padding-right:0.673px;color:#800000;">0</div>
<div style="left:813px;top:420px;width:57px;height:17px;background:#fce0dc;"></div>
<div class="t" style="left:813px;top:423px;width:56px;text-align:right;letter-spacing:-0.589px;padding-right:0.589px;color:#800000;">0.00</div>
<div style="left:871px;top:420px;width:61px;height:17px;background:#fce0dc;"></div>
<div class="t" style="left:871px;top:423px;width:60px;text-align:right;letter-spacing:-0.589px;padding-right:0.589px;color:#800000;">0.00</div>
<div style="left:933px;top:420px;width:63px;height:17px;background:#fce0dc;"></div>
<div style="left:959px;top:423px;width:11px;height:11px;background:#fff;border:1px solid #9c9c9c;"></div>
<div style="left:997px;top:420px;width:82px;height:17px;background:#fce0dc;"></div>
<div class="t" style="left:997px;top:423px;width:81px;text-align:right;letter-spacing:-0.589px;padding-right:0.589px;color:#800000;">0.00</div>
<div style="left:1080px;top:420px;width:83px;height:17px;background:#fce0dc;"></div>
<div class="t" style="left:1080px;top:423px;width:82px;text-align:right;letter-spacing:-0.589px;padding-right:0.589px;color:#800000;">0.00</div>
<div style="left:1164px;top:420px;width:23px;height:17px;background:#fce0dc;"></div>
<div style="left:1189px;top:420px;width:50px;height:17px;background:#fff;"></div>
<div style="left:167px;top:438px;width:114px;height:17px;background:#e8eeff;"></div>
<div class="t" style="left:169px;top:441px;letter-spacing:-0.938px;color:#800000;">SALES</div>
<div style="left:282px;top:438px;width:136px;height:17px;background:#e8eeff;"></div>
<div class="t" style="left:284px;top:441px;letter-spacing:-0.327px;color:#800000;">2021/05/06 17:38:11</div>
<div style="left:421px;top:438px;width:127px;height:17px;background:#e8eeff;"></div>
<div class="t" style="left:423px;top:441px;letter-spacing:-0.803px;color:#800000;">Sales</div>
<div style="left:549px;top:438px;width:68px;height:17px;background:#e8eeff;"></div>
<div style="left:701px;top:438px;width:51px;height:17px;background:#e8eeff;"></div>
<div class="t" style="left:701px;top:441px;width:50px;text-align:right;letter-spacing:-0.673px;padding-right:0.673px;color:#800000;">0</div>
<div style="left:753px;top:438px;width:59px;height:17px;background:#e8eeff;"></div>
<div class="t" style="left:753px;top:441px;width:58px;text-align:right;letter-spacing:-0.673px;padding-right:0.673px;color:#800000;">0</div>
<div style="left:813px;top:438px;width:57px;height:17px;background:#e8eeff;"></div>
<div class="t" style="left:813px;top:441px;width:56px;text-align:right;letter-spacing:-0.589px;padding-right:0.589px;color:#800000;">0.00</div>
<div style="left:871px;top:438px;width:61px;height:17px;background:#e8eeff;"></div>
<div class="t" style="left:871px;top:441px;width:60px;text-align:right;letter-spacing:-0.589px;padding-right:0.589px;color:#800000;">0.00</div>
<div style="left:933px;top:438px;width:63px;height:17px;background:#e8eeff;"></div>
<div style="left:959px;top:441px;width:11px;height:11px;background:#fff;border:1px solid #9c9c9c;"></div>
<div style="left:997px;top:438px;width:82px;height:17px;background:#e8eeff;"></div>
<div class="t" style="left:997px;top:441px;width:81px;text-align:right;letter-spacing:-0.589px;padding-right:0.589px;color:#800000;">0.00</div>
<div style="left:1080px;top:438px;width:83px;height:17px;background:#e8eeff;"></div>
<div class="t" style="left:1080px;top:441px;width:82px;text-align:right;letter-spacing:-0.589px;padding-right:0.589px;color:#800000;">0.00</div>
<div style="left:1164px;top:438px;width:23px;height:17px;background:#e8eeff;"></div>
<div style="left:1189px;top:438px;width:50px;height:17px;background:#e8e8e8;"></div>
<div style="left:167px;top:456px;width:114px;height:17px;background:#e8eeff;"></div>
<div class="t" style="left:169px;top:459px;letter-spacing:-0.92px;color:#800000;">SALES-NS</div>
<div style="left:282px;top:456px;width:136px;height:17px;background:#e8eeff;"></div>
<div class="t" style="left:284px;top:459px;letter-spacing:-0.374px;color:#800000;">2021/05/06 17:38:12</div>
<div style="left:421px;top:456px;width:127px;height:17px;background:#e8eeff;"></div>
<div class="t" style="left:423px;top:459px;letter-spacing:-0.627px;color:#800000;">Sales (no stock)</div>
<div style="left:549px;top:456px;width:68px;height:17px;background:#e8eeff;"></div>
<div style="left:701px;top:456px;width:51px;height:17px;background:#e8eeff;"></div>
<div class="t" style="left:701px;top:459px;width:50px;text-align:right;letter-spacing:-0.673px;padding-right:0.673px;color:#800000;">0</div>
<div style="left:753px;top:456px;width:59px;height:17px;background:#e8eeff;"></div>
<div class="t" style="left:753px;top:459px;width:58px;text-align:right;letter-spacing:-0.673px;padding-right:0.673px;color:#800000;">0</div>
<div style="left:813px;top:456px;width:57px;height:17px;background:#e8eeff;"></div>
<div class="t" style="left:813px;top:459px;width:56px;text-align:right;letter-spacing:-0.589px;padding-right:0.589px;color:#800000;">0.00</div>
<div style="left:871px;top:456px;width:61px;height:17px;background:#e8eeff;"></div>
<div class="t" style="left:871px;top:459px;width:60px;text-align:right;letter-spacing:-0.589px;padding-right:0.589px;color:#800000;">0.00</div>
<div style="left:933px;top:456px;width:63px;height:17px;background:#e8eeff;"></div>
<div style="left:959px;top:459px;width:11px;height:11px;background:#fff;border:1px solid #9c9c9c;"></div>
<div style="left:997px;top:456px;width:82px;height:17px;background:#e8eeff;"></div>
<div class="t" style="left:997px;top:459px;width:81px;text-align:right;letter-spacing:-0.589px;padding-right:0.589px;color:#800000;">0.00</div>
<div style="left:1080px;top:456px;width:83px;height:17px;background:#e8eeff;"></div>
<div class="t" style="left:1080px;top:459px;width:82px;text-align:right;letter-spacing:-0.589px;padding-right:0.589px;color:#800000;">0.00</div>
<div style="left:1164px;top:456px;width:23px;height:17px;background:#e8eeff;"></div>
<div style="left:1189px;top:456px;width:50px;height:17px;background:#fff;"></div>
<div style="left:618px;top:240px;width:82px;height:35px;background:#800000;"></div>
<div class="t" style="left:620px;top:243px;letter-spacing:-0.7px;color:#fff;">Power tools</div>
<div style="left:618px;top:276px;width:82px;height:35px;background:#ffe6ff;"></div>
<div class="t" style="left:620px;top:279px;letter-spacing:-0.727px;color:#000;">Labour</div>
<div style="left:618px;top:312px;width:82px;height:35px;background:#e0e0ff;"></div>
<div class="t" style="left:620px;top:315px;letter-spacing:-1.225px;color:#800000;">Bom</div>
<div style="left:618px;top:348px;width:82px;height:17px;background:#ffe6ff;"></div>
<div class="t" style="left:620px;top:351px;letter-spacing:-0.727px;color:#000;">Labour</div>
<div style="left:618px;top:366px;width:82px;height:35px;background:#ebff9e;"></div>
<div class="t" style="left:620px;top:369px;letter-spacing:-0.726px;color:#800000;">Option</div>
<div style="left:618px;top:402px;width:82px;height:35px;background:#fce0dc;"></div>
<div class="t" style="left:620px;top:405px;letter-spacing:-0.744px;color:#800000;">Purchases</div>
<div style="left:618px;top:438px;width:82px;height:35px;background:#e8eeff;"></div>
<div class="t" style="left:620px;top:441px;letter-spacing:-0.803px;color:#800000;">Sales</div>
<div style="left:168px;top:240px;width:1019px;height:1px;background-image:repeating-linear-gradient(90deg,#800000 0 1px,#7fffff 1px 2px);"></div>
<div style="left:1189px;top:240px;width:50px;height:1px;background-image:repeating-linear-gradient(90deg,#f5db95 0 1px,#0a246a 1px 2px);"></div>
<div style="left:419px;top:240px;width:2px;height:1px;background-image:linear-gradient(90deg,#fff 0 1px,#000 1px 2px);"></div>
<div style="left:1187px;top:240px;width:2px;height:1px;background-image:linear-gradient(90deg,#fff 0 1px,#000 1px 2px);"></div>
<div style="left:281px;top:240px;width:1px;height:1px;background:#a0a0a0;"></div>
<div style="left:418px;top:240px;width:1px;height:1px;background:#a0a0a0;"></div>
<div style="left:548px;top:240px;width:1px;height:1px;background:#a0a0a0;"></div>
<div style="left:617px;top:240px;width:1px;height:1px;background:#a0a0a0;"></div>
<div style="left:700px;top:240px;width:1px;height:1px;background:#a0a0a0;"></div>
<div style="left:752px;top:240px;width:1px;height:1px;background:#a0a0a0;"></div>
<div style="left:812px;top:240px;width:1px;height:1px;background:#a0a0a0;"></div>
<div style="left:870px;top:240px;width:1px;height:1px;background:#a0a0a0;"></div>
<div style="left:932px;top:240px;width:1px;height:1px;background:#a0a0a0;"></div>
<div style="left:996px;top:240px;width:1px;height:1px;background:#a0a0a0;"></div>
<div style="left:1079px;top:240px;width:1px;height:1px;background:#a0a0a0;"></div>
<div style="left:1163px;top:240px;width:1px;height:1px;background:#a0a0a0;"></div>
<div style="left:168px;top:256px;width:1019px;height:1px;background-image:repeating-linear-gradient(90deg,#800000 0 1px,#7fffff 1px 2px);"></div>
<div style="left:1189px;top:256px;width:50px;height:1px;background-image:repeating-linear-gradient(90deg,#f5db95 0 1px,#0a246a 1px 2px);"></div>
<div style="left:419px;top:256px;width:2px;height:1px;background-image:linear-gradient(90deg,#fff 0 1px,#000 1px 2px);"></div>
<div style="left:1187px;top:256px;width:2px;height:1px;background-image:linear-gradient(90deg,#fff 0 1px,#000 1px 2px);"></div>
<div style="left:281px;top:256px;width:1px;height:1px;background:#a0a0a0;"></div>
<div style="left:418px;top:256px;width:1px;height:1px;background:#a0a0a0;"></div>
<div style="left:548px;top:256px;width:1px;height:1px;background:#a0a0a0;"></div>
<div style="left:617px;top:256px;width:1px;height:1px;background:#a0a0a0;"></div>
<div style="left:700px;top:256px;width:1px;height:1px;background:#a0a0a0;"></div>
<div style="left:752px;top:256px;width:1px;height:1px;background:#a0a0a0;"></div>
<div style="left:812px;top:256px;width:1px;height:1px;background:#a0a0a0;"></div>
<div style="left:870px;top:256px;width:1px;height:1px;background:#a0a0a0;"></div>
<div style="left:932px;top:256px;width:1px;height:1px;background:#a0a0a0;"></div>
<div style="left:996px;top:256px;width:1px;height:1px;background:#a0a0a0;"></div>
<div style="left:1079px;top:256px;width:1px;height:1px;background:#a0a0a0;"></div>
<div style="left:1163px;top:256px;width:1px;height:1px;background:#a0a0a0;"></div>
<div style="left:167px;top:240px;width:1px;height:17px;background-image:repeating-linear-gradient(180deg,#7fffff 0 1px,#800000 1px 2px);"></div>
<div style="left:1238px;top:240px;width:1px;height:17px;background-image:repeating-linear-gradient(180deg,#f5db95 0 1px,#0a246a 1px 2px);"></div>
<div style="left:401px;top:242px;width:15px;height:13px;background:#f0f0f0;border:1px solid #fff;"></div>
<div style="left:683px;top:242px;width:15px;height:31px;background:#f0f0f0;border:1px solid #fff;"></div>
<div style="left:683px;top:256px;width:15px;height:1px;background-image:repeating-linear-gradient(90deg,#0f0f0f 0 1px,#f0f0f0 1px 2px);"></div>
<div style="left:155px;top:474px;width:1084px;height:94px;background:#fff;"></div>
<div style="left:155px;top:568px;width:1084px;height:1px;background:#a0a0a0;"></div>
<div style="left:155px;top:569px;width:1084px;height:24px;background:#ffe8d4;"></div>
<div style="left:166px;top:569px;width:1px;height:24px;background:#a0a0a0;"></div>
<div style="left:169px;top:571px;width:111px;height:19px;background:#ffe8d4;border:1px solid #a0a0a0;"></div>
<div class="t" style="left:172px;top:575px;font-size:11px;">13</div>
<div style="left:155px;top:593px;width:1084px;height:17px;background:#f9f9f9;"></div>
<div style="left:155px;top:593px;width:18px;height:17px;background:#f0f0f0;border:1px solid #000;border-right:2px solid #000;box-shadow:inset 0 0 0 1px #fff;"></div>
<div style="left:173px;top:593px;width:305px;height:17px;background:#f0f0f0;border:1px solid #000;border-left:none;box-shadow:inset 0 0 0 1px #fff;"></div>
<div style="left:1222px;top:593px;width:17px;height:17px;background:#f0f0f0;border:1px solid #000;box-shadow:inset 0 0 0 1px #fff;"></div>
<svg style="left:161px;top:597px" width="5" height="9" viewBox="0 0 5 9"><path d="M5 0 V9 L0 4.5 Z" fill="#000"/></svg>
<svg style="left:1228px;top:597px" width="5" height="9" viewBox="0 0 5 9"><path d="M0 0 V9 L5 4.5 Z" fill="#000"/></svg>
<svg style="left:0;top:0" width="1247" height="617" viewBox="0 0 1247 617"><path d="M98 275 V280 L95 277.5 Z M101.2 275 V280 L98.2 277.5 Z" fill="#000"/><path d="M113.5 271 L116.5 274.2 H110.5 Z M113.5 283.2 L116.5 280 H110.5 Z" fill="#000"/><path d="M126 275 V280 L129 277.5 Z M129.2 275 V280 L132.2 277.5 Z" fill="#000"/><path d="M126 298.8 L130.2 303 L134.4 298.8" fill="none" stroke="#505050" stroke-width="1.1"/><rect x="53.1" y="326.8" width="7.7" height="2.4" fill="#0a0a0a"/><rect x="53.1" y="329.2" width="7.7" height="1.2" fill="#444"/><rect x="50" y="330.1" width="13.8" height="6" rx="1.6" fill="#0a0a0a"/><rect x="53.1" y="333.2" width="7.7" height="5.6" fill="#0a0a0a"/><rect x="54.4" y="334.4" width="5.4" height="3.2" fill="#d8d8d8"/><circle cx="61.6" cy="332.3" r="0.6" fill="#ddd"/><path d="M124 419.8 L128.2 424 L132.4 419.8" fill="none" stroke="#505050" stroke-width="1.1"/><circle cx="220.6" cy="19.5" r="0.75" fill="#1a1a1a" opacity="1"/><circle cx="223.35" cy="19.5" r="0.75" fill="#1a1a1a" opacity="1"/><circle cx="226.1" cy="19.5" r="0.75" fill="#1a1a1a" opacity="1"/><circle cx="228.8" cy="19.5" r="0.75" fill="#1a1a1a" opacity="1"/><circle cx="231.5" cy="19.5" r="0.75" fill="#1a1a1a" opacity="1"/><circle cx="220.6" cy="22.3" r="0.75" fill="#1a1a1a" opacity="1"/><circle cx="220.6" cy="25.0" r="0.75" fill="#1a1a1a" opacity="1"/><circle cx="220.6" cy="27.7" r="0.75" fill="#1a1a1a" opacity="1"/><circle cx="220.6" cy="30.4" r="0.75" fill="#1a1a1a" opacity="1"/><circle cx="223.4" cy="30.4" r="0.75" fill="#1a1a1a" opacity="1"/><circle cx="231.5" cy="22.3" r="0.75" fill="#1a1a1a" opacity="1"/><circle cx="231.5" cy="24.8" r="0.75" fill="#1a1a1a" opacity="0.4"/><circle cx="228.3" cy="27.9" r="2.2" fill="none" stroke="#1a1a1a" stroke-width="1.4"/><path d="M230 29.7 L232.3 32" stroke="#1a1a1a" stroke-width="1.6" stroke-linecap="round"/><path d="M219.4 50.699999999999996 A2.3 2.3 0 0 1 221.70000000000002 48.4 M225.89999999999998 48.4 A2.3 2.3 0 0 1 228.2 50.699999999999996 M228.2 54.900000000000006 A2.3 2.3 0 0 1 225.89999999999998 57.2 M221.70000000000002 57.2 A2.3 2.3 0 0 1 219.4 54.900000000000006" fill="none" stroke="#1a1a1a" stroke-width="1.4"/><circle cx="223.8" cy="48.4" r="0.65" fill="#1a1a1a"/><circle cx="228.2" cy="52.8" r="0.65" fill="#1a1a1a"/><circle cx="223.8" cy="57.2" r="0.65" fill="#1a1a1a"/><circle cx="219.4" cy="52.8" r="0.65" fill="#1a1a1a"/><path d="M223.2 54.599999999999994 A2.3 2.3 0 0 1 225.5 52.3 M230.1 52.3 A2.3 2.3 0 0 1 232.4 54.599999999999994 M232.4 58.800000000000004 A2.3 2.3 0 0 1 230.1 61.1 M225.5 61.1 A2.3 2.3 0 0 1 223.2 58.800000000000004" fill="none" stroke="#1a1a1a" stroke-width="1.4"/><circle cx="227.8" cy="52.3" r="0.65" fill="#1a1a1a"/><circle cx="232.4" cy="56.7" r="0.65" fill="#1a1a1a"/><circle cx="227.8" cy="61.1" r="0.65" fill="#1a1a1a"/><circle cx="223.2" cy="56.7" r="0.65" fill="#1a1a1a"/><rect x="220.2" y="80.3" width="3.4" height="3.6" fill="#1a1a1a"/><rect x="221.2" y="81.9" width="1.4" height="0.8" fill="#bbb"/><path d="M225.4 82.4 H231.9 M225.4 87.6 H231.9" stroke="#1a1a1a" stroke-width="1.3"/><path d="M219.3 87.8 L221.4 89.4 L224.5 86.1" fill="none" stroke="#1a1a1a" stroke-width="1.4"/><path d="M1228.6 17.8 L1232.5 21.7 V24.2 L1228.6 20.4 L1224.7 24.2 V21.7 Z" fill="#5c5c5c"/><path d="M1228.6 149.9 L1232.5 146 V143.5 L1228.6 147.3 L1224.7 143.5 V146 Z" fill="#5c5c5c"/><path transform="translate(158,207)" d="M0 0.5H1M0 4.5H1M0 8.5H1M2 0.5H6M2 2.5H6M2 4.5H6M2 6.5H6M2 8.5H6" stroke="#000" stroke-width="1" shape-rendering="crispEdges"/><path transform="translate(158,226)" d="M0 0.5H1M0 4.5H1M0 8.5H1M2 0.5H6M2 2.5H6M2 4.5H6M2 6.5H6M2 8.5H6" stroke="#000" stroke-width="1" shape-rendering="crispEdges"/><path transform="translate(961,245)" d="M0 2v3h1v1h1v1h1v-1h1v-1h1v-1h1v-1h1v-3h-1v1h-1v1h-1v1h-1v1h-1v-1h-1v-1z" fill="#000" shape-rendering="crispEdges"/><path transform="translate(961,263)" d="M0 2v3h1v1h1v1h1v-1h1v-1h1v-1h1v-1h1v-3h-1v1h-1v1h-1v1h-1v1h-1v-1h-1v-1z" fill="#000" shape-rendering="crispEdges"/><path transform="translate(961,281)" d="M0 2v3h1v1h1v1h1v-1h1v-1h1v-1h1v-1h1v-3h-1v1h-1v1h-1v1h-1v1h-1v-1h-1v-1z" fill="#000" shape-rendering="crispEdges"/><path transform="translate(961,299)" d="M0 2v3h1v1h1v1h1v-1h1v-1h1v-1h1v-1h1v-3h-1v1h-1v1h-1v1h-1v1h-1v-1h-1v-1z" fill="#000" shape-rendering="crispEdges"/><path transform="translate(961,317)" d="M0 2v3h1v1h1v1h1v-1h1v-1h1v-1h1v-1h1v-3h-1v1h-1v1h-1v1h-1v1h-1v-1h-1v-1z" fill="#000" shape-rendering="crispEdges"/><path transform="translate(961,335)" d="M0 2v3h1v1h1v1h1v-1h1v-1h1v-1h1v-1h1v-3h-1v1h-1v1h-1v1h-1v1h-1v-1h-1v-1z" fill="#000" shape-rendering="crispEdges"/><path transform="translate(961,353)" d="M0 2v3h1v1h1v1h1v-1h1v-1h1v-1h1v-1h1v-3h-1v1h-1v1h-1v1h-1v1h-1v-1h-1v-1z" fill="#000" shape-rendering="crispEdges"/><path transform="translate(961,371)" d="M0 2v3h1v1h1v1h1v-1h1v-1h1v-1h1v-1h1v-3h-1v1h-1v1h-1v1h-1v1h-1v-1h-1v-1z" fill="#000" shape-rendering="crispEdges"/><path transform="translate(961,389)" d="M0 2v3h1v1h1v1h1v-1h1v-1h1v-1h1v-1h1v-3h-1v1h-1v1h-1v1h-1v1h-1v-1h-1v-1z" fill="#000" shape-rendering="crispEdges"/><path transform="translate(961,407)" d="M0 2v3h1v1h1v1h1v-1h1v-1h1v-1h1v-1h1v-3h-1v1h-1v1h-1v1h-1v1h-1v-1h-1v-1z" fill="#000" shape-rendering="crispEdges"/><path transform="translate(961,425)" d="M0 2v3h1v1h1v1h1v-1h1v-1h1v-1h1v-1h1v-3h-1v1h-1v1h-1v1h-1v1h-1v-1h-1v-1z" fill="#000" shape-rendering="crispEdges"/><path transform="translate(961,443)" d="M0 2v3h1v1h1v1h1v-1h1v-1h1v-1h1v-1h1v-3h-1v1h-1v1h-1v1h-1v1h-1v-1h-1v-1z" fill="#000" shape-rendering="crispEdges"/><path transform="translate(961,461)" d="M0 2v3h1v1h1v1h1v-1h1v-1h1v-1h1v-1h1v-3h-1v1h-1v1h-1v1h-1v1h-1v-1h-1v-1z" fill="#000" shape-rendering="crispEdges"/><path d="M405 248 H412 L408.5 252 Z" fill="#000"/><path d="M687 255.5 H694 L690.5 259.5 Z" fill="#000"/><path d="M159 244h1v1h1v1h1v1h1v1h1v1h-1v1h-1v1h-1v1h-1v1h-1v-2h1v-1h1v-1h1v-1h-1v-1h-1v-1h-1z M159 247v3h1v-1h1v-1h-1v-1z" fill="#000" shape-rendering="crispEdges"/></svg>
</body></html>
